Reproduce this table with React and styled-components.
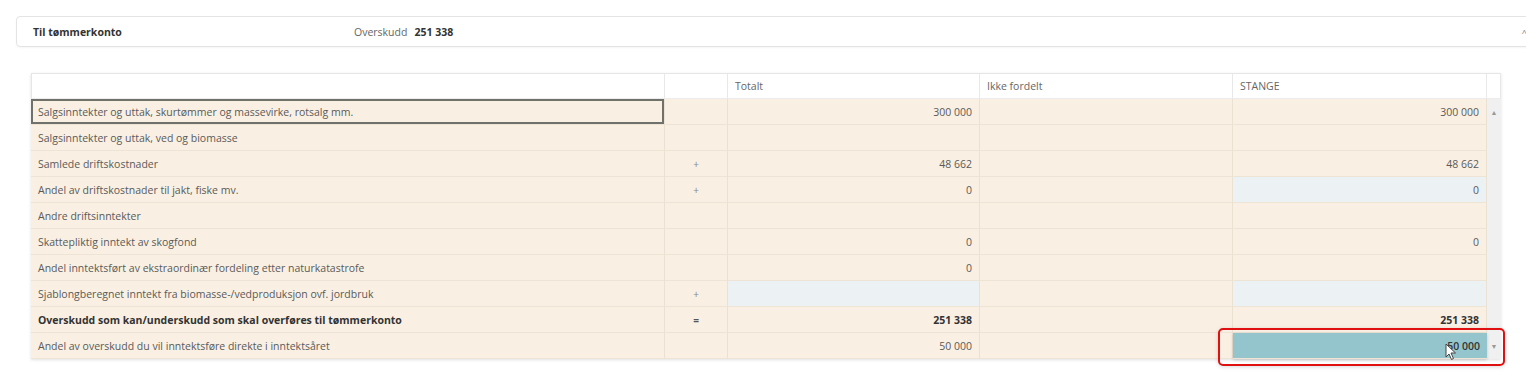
import React from "react";
import styled, { createGlobalStyle } from "styled-components";

const GlobalStyle = createGlobalStyle`
  html {
    overflow: hidden;
  }
  body {
    margin: 0;
    padding: 0;
    background: #ffffff;
    font-family: "Open Sans", "Noto Sans", "Liberation Sans", sans-serif;
    font-size: 10.5px;
    color: #555;
  }
`;

const COLS = "634px 63px 252px 253px 254px 14px";

const rows = [
  { label: "Salgsinntekter og uttak, skurtømmer og massevirke, rotsalg mm.", sign: "", total: "300 000", stange: "300 000", focus: true },
  { label: "Salgsinntekter og uttak, ved og biomasse", sign: "", total: "", stange: "" },
  { label: "Samlede driftskostnader", sign: "+", total: "48 662", stange: "48 662" },
  { label: "Andel av driftskostnader til jakt, fiske mv.", sign: "+", total: "0", stange: "0", stangeInput: true },
  { label: "Andre driftsinntekter", sign: "", total: "", stange: "" },
  { label: "Skattepliktig inntekt av skogfond", sign: "", total: "0", stange: "0" },
  { label: "Andel inntektsført av ekstraordinær fordeling etter naturkatastrofe", sign: "", total: "0", stange: "" },
  { label: "Sjablongberegnet inntekt fra biomasse-/vedproduksjon ovf. jordbruk", sign: "+", total: "", stange: "", totalInput: true, stangeInput: true },
  { label: "Overskudd som kan/underskudd som skal overføres til tømmerkonto", sign: "=", total: "251 338", stange: "251 338", bold: true },
  { label: "Andel av overskudd du vil inntektsføre direkte i inntektsåret", sign: "", total: "50 000", stange: "50 000", active: true },
];

const Page = styled.div`
  padding: 16px 0 40px 16px;
`;

const SummaryBar = styled.div`
  display: flex;
  align-items: center;
  height: 29px;
  margin-right: -20px;
  padding-left: 16px;
  border: 1px solid #e4e4e4;
  border-radius: 4px;
  box-shadow: 0 1px 2px rgba(0, 0, 0, 0.04);
  color: #333;
  position: relative;
`;

const SummaryTitle = styled.div`
  width: 321px;
  font-weight: 700;
`;

const SummaryLabel = styled.span`
  color: #666;
  margin-right: 7px;
`;

const SummaryValue = styled.span`
  font-weight: 700;
  color: #333;
`;

const Chevron = styled.span`
  position: absolute;
  right: 18px;
  top: 9px;
  font-size: 9px;
  color: #777;
`;

const TableWrap = styled.div`
  position: relative;
  margin: 26px 0 0 15px;
  width: 1470px;
`;

const Table = styled.div`
  display: grid;
  grid-template-columns: ${COLS};
  box-shadow: 0 1px 3px rgba(0, 0, 0, 0.12);
`;

const HeadCell = styled.div`
  height: 26px;
  box-sizing: border-box;
  display: flex;
  align-items: center;
  padding-left: 7px;
  background: #fff;
  color: #666;
  border-top: 1px solid #e6e6e6;
  border-right: 1px solid #e8e8e8;
  border-bottom: 1px solid #ececec;
  &:first-child {
    border-left: 1px solid #e6e6e6;
  }
`;

const Cell = styled.div`
  height: 26px;
  box-sizing: border-box;
  display: flex;
  align-items: center;
  justify-content: ${(p) => (p.$align === "right" ? "flex-end" : p.$align === "center" ? "center" : "flex-start")};
  padding: 0 7px;
  background: ${(p) => (p.$input ? "#ecf1f3" : "#f9f0e3")};
  border-right: 1px solid #ebe1d2;
  border-bottom: 1px solid #eee4d5;
  font-weight: ${(p) => (p.$bold ? 700 : 400)};
  color: ${(p) => (p.$bold ? "#333" : "#5a5a5a")};
  white-space: nowrap;
  position: relative;
`;

const LabelCell = styled(Cell)`
  box-shadow: ${(p) => (p.$focus ? "inset 0 0 0 2px #6f716a" : "none")};
`;

const SignText = styled.span`
  color: ${(p) => (p.$strong ? "#555" : "#888")};
  font-size: 10px;
  font-weight: ${(p) => (p.$strong ? 700 : 400)};
`;

const ActiveCell = styled(Cell)`
  background: #95c5cc;
  color: #333;
  font-weight: 600;
  border-right: none;
  box-shadow: 0 1px 3px rgba(0, 0, 0, 0.18);
`;

const ScrollCell = styled.div`
  background: #f0f0f0;
  display: flex;
  align-items: center;
  justify-content: center;
  color: #999;
  font-size: 7px;
  height: 26px;
`;

const Highlight = styled.div`
  position: absolute;
  left: 1187px;
  top: 255px;
  width: 287px;
  height: 38px;
  box-sizing: border-box;
  border: 2px solid #e01010;
  border-radius: 5px;
  box-shadow: 0 1px 4px rgba(0, 0, 0, 0.15);
  pointer-events: none;
`;

const Cursor = styled.svg`
  position: absolute;
  left: 1414px;
  top: 270px;
`;

function Row({ row, index }) {
  const last = index === rows.length - 1;
  const StangeCell = row.active ? ActiveCell : Cell;
  return (
    <>
      <LabelCell $focus={row.focus} $bold={row.bold}>
        {row.label}
      </LabelCell>
      <Cell $align="center">
        <SignText $strong={row.bold}>{row.sign}</SignText>
      </Cell>
      <Cell $align="right" $bold={row.bold} $input={row.totalInput}>
        {row.total}
      </Cell>
      <Cell />
      <StangeCell $align="right" $bold={row.bold} $input={row.stangeInput}>
        {row.stange}
      </StangeCell>
      <ScrollCell>{index === 0 ? "▲" : last ? "▼" : ""}</ScrollCell>
    </>
  );
}

export default function App() {
  return (
    <>
      <GlobalStyle />
      <Page>
        <SummaryBar>
          <SummaryTitle>Til tømmerkonto</SummaryTitle>
          <SummaryLabel>Overskudd</SummaryLabel>
          <SummaryValue>251 338</SummaryValue>
          <Chevron>^</Chevron>
        </SummaryBar>
        <TableWrap>
          <Table>
            <HeadCell />
            <HeadCell />
            <HeadCell>Totalt</HeadCell>
            <HeadCell>Ikke fordelt</HeadCell>
            <HeadCell>STANGE</HeadCell>
            <HeadCell />
            {rows.map((row, i) => (
              <Row key={i} row={row} index={i} />
            ))}
          </Table>
          <Highlight />
          <Cursor width="12" height="18" viewBox="0 0 12 18">
            <path d="M1 1 L1 14 L4 11 L6.5 16.5 L8.5 15.5 L6 10 L10.5 10 Z" fill="#fff" stroke="#444" strokeWidth="1" strokeLinejoin="round" />
          </Cursor>
        </TableWrap>
      </Page>
    </>
  );
}
